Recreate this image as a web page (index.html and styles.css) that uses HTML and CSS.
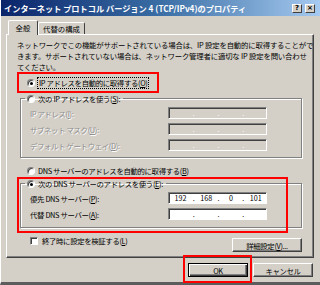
FILE: index.html
```html
<!DOCTYPE html>
<html lang="ja">
<head>
<meta charset="utf-8">
<link rel="stylesheet" href="styles.css">
</head>
<body>
<div class="window">
  <div class="titlebar">
    <span class="title">インターネット プロトコル バージョン 4 (TCP/IPv4)のプロパティ</span>
    <div class="tb-btns">
      <span class="tb-btn">?</span>
      <span class="tb-btn">×</span>
    </div>
  </div>
  <div class="tabs">
    <div class="tab active">全般</div>
    <div class="tab">代替の構成</div>
  </div>
  <div class="panel">
    <p class="desc">ネットワークでこの機能がサポートされている場合は、IP 設定を自動的に取得することがで<br>きます。サポートされていない場合は、ネットワーク管理者に適切な IP 設定を問い合わせ<br>てください。</p>
    <div class="hl-row">
      <span class="radio checked"></span>
      <span class="focus">IP アドレスを自動的に取得する(<u>O</u>)</span>
    </div>
    <fieldset class="group">
      <legend class="legend"><span class="radio"></span><span>次の IP アドレスを使う(<u>S</u>):</span></legend>
      <div class="row"><span class="label dis">IP アドレス(<u>I</u>):</span><span class="ipfield disabled"><i></i><b>.</b><i></i><b>.</b><i></i><b>.</b><i></i></span></div>
      <div class="row"><span class="label dis">サブネット マスク(<u>U</u>):</span><span class="ipfield disabled"><i></i><b>.</b><i></i><b>.</b><i></i><b>.</b><i></i></span></div>
      <div class="row"><span class="label dis">デフォルト ゲートウェイ(<u>D</u>):</span><span class="ipfield disabled"><i></i><b>.</b><i></i><b>.</b><i></i><b>.</b><i></i></span></div>
    </fieldset>
    <div class="opt-row">
      <span class="radio"></span>
      <span>DNS サーバーのアドレスを自動的に取得する(<u>B</u>)</span>
    </div>
    <fieldset class="group group2">
      <legend class="legend"><span class="radio checked"></span><span>次の DNS サーバーのアドレスを使う(<u>E</u>):</span></legend>
      <div class="row"><span class="label">優先 DNS サーバー(<u>P</u>):</span><span class="ipfield"><i>192</i><b>.</b><i>168</i><b>.</b><i>0</i><b>.</b><i>101</i></span></div>
      <div class="row"><span class="label">代替 DNS サーバー(<u>A</u>):</span><span class="ipfield"><i></i><b>.</b><i></i><b>.</b><i></i><b>.</b><i></i></span></div>
    </fieldset>
    <div class="bottom-row">
      <div class="check-row">
        <span class="checkbox"></span>
        <span>終了時に設定を検証する(<u>L</u>)</span>
      </div>
      <span class="btn details">詳細設定(<u>V</u>)...</span>
    </div>
    <div class="redbox rb2"></div>
  </div>
  <div class="actions">
    <span class="btn default">OK</span>
    <span class="btn">キャンセル</span>
  </div>
  <div class="redbox rb3"></div>
</div>
</body>
</html>
```

FILE: styles.css
```css
* { box-sizing: border-box; }
html, body { margin: 0; padding: 0; }
body {
  width: 320px;
  height: 285px;
  overflow: hidden;
  background: #d4d0c8;
  font-family: "Noto Sans CJK JP", "Noto Sans", sans-serif;
  font-size: 7.4px;
  color: #000;
}
u { text-decoration: underline; text-underline-offset: 1px; }
.window {
  position: relative;
  width: 320px;
  height: 285px;
  border-left: 1px solid #fff;
  border-bottom: 3px solid #5c5c5c;
}
.titlebar {
  height: 16px;
  display: flex;
  align-items: center;
  padding: 0 5px 0 3px;
  background: linear-gradient(90deg, #0a246a 0%, #3a6ea5 50%, #a6caf0 100%);
  color: #fff;
  font-weight: bold;
  font-size: 8.2px;
  white-space: nowrap;
}
.title { letter-spacing: 0; }
.tb-btns { margin-left: auto; display: flex; gap: 3px; }
.tb-btn {
  width: 10px;
  height: 9px;
  background: #d4d0c8;
  color: #000;
  border: 1px solid;
  border-color: #fff #404040 #404040 #fff;
  font-size: 7px;
  line-height: 7px;
  text-align: center;
  font-family: "DejaVu Sans", sans-serif;
}
.tabs {
  height: 18px;
  display: flex;
  align-items: flex-end;
  padding-left: 7px;
}
.tab {
  height: 12px;
  padding: 0 4px;
  border: 1px solid;
  border-bottom: 0;
  border-color: #fff #404040 #fff #fff;
  border-radius: 2px 2px 0 0;
  line-height: 11px;
  width: 47px;
}
.tab.active {
  height: 15px;
  width: 30px;
  margin-bottom: -1px;
  padding-top: 1px;
  position: relative;
  z-index: 1;
  background: #d4d0c8;
  text-align: center;
}
.panel {
  position: relative;
  margin-left: 5px;
  width: 308px;
  height: 224px;
  border: 1px solid;
  border-color: #fff #404040 #404040 #fff;
  box-shadow: inset -1px -1px #808080;
  padding: 4px 11px 0 10px;
}
.desc {
  margin: 0;
  line-height: 11px;
  white-space: nowrap;
  letter-spacing: -0.18px;
}
.hl-row {
  display: inline-flex;
  align-items: center;
  height: 21px;
  border: 2px solid #f00;
  padding: 0 9px 0 8px;
  gap: 3px;
  letter-spacing: -0.35px;
}
.focus { outline: 1px dotted #000; line-height: 10px; padding: 0 1px; }
.radio {
  position: relative;
  display: inline-block;
  width: 8px;
  height: 8px;
  border-radius: 50%;
  background: #fff;
  border: 1px solid;
  border-color: #808080 #fff #fff #808080;
  box-shadow: inset 1px 1px #404040;
  flex: none;
}
.radio.checked::after {
  content: "";
  position: absolute;
  left: 2px;
  top: 2px;
  width: 3px;
  height: 3px;
  border-radius: 50%;
  background: #000;
}
.group {
  margin: 0 0 0 3px;
  width: 282px;
  padding: 3px 0 6px 9px;
  border: 1px solid #808080;
  box-shadow: inset 1px 1px #fff, 1px 1px #fff;
  min-width: 0;
}
.legend {
  display: flex;
  align-items: center;
  gap: 3px;
  height: 11px;
  padding: 0 3px 0 2px;
  margin-left: -5px;
  letter-spacing: -0.35px;
}
.row {
  display: flex;
  align-items: center;
  height: 12px;
  letter-spacing: -0.35px;
}
.row + .row { margin-top: 4px; }
.label { width: 138px; }
.dis { color: #8e8e8e; text-shadow: 1px 1px #fff; }
.ipfield {
  display: flex;
  align-items: center;
  width: 99px;
  height: 12px;
  background: #fff;
  border: 1px solid;
  border-color: #808080 #fff #fff #808080;
  box-shadow: inset 1px 1px #404040;
  font-size: 7.2px;
  letter-spacing: 0;
}
.ipfield i { font-style: normal; flex: 1; text-align: center; }
.ipfield b { font-weight: normal; width: 4px; text-align: center; }
.ipfield i:first-child { flex: 1.1; }
.ipfield.disabled { background: #d4d0c8; color: #fff; }
.opt-row {
  display: flex;
  align-items: center;
  gap: 3px;
  height: 11px;
  margin-top: 7px;
  padding-left: 10px;
  letter-spacing: -0.35px;
}
.group2 { margin-top: 2px; padding-bottom: 7px; }
.bottom-row {
  display: flex;
  align-items: flex-start;
  justify-content: space-between;
  padding-left: 13px;
}
.check-row {
  display: flex;
  align-items: center;
  gap: 4px;
  height: 11px;
  margin-top: 7px;
  letter-spacing: -0.35px;
}
.checkbox {
  width: 8px;
  height: 8px;
  background: #fff;
  border: 1px solid;
  border-color: #808080 #fff #fff #808080;
  box-shadow: inset 1px 1px #404040;
}
.btn {
  display: inline-flex;
  align-items: center;
  justify-content: center;
  height: 14px;
  background: #d4d0c8;
  border: 1px solid;
  border-color: #fff #404040 #404040 #fff;
  box-shadow: inset -1px -1px #808080;
  letter-spacing: -0.35px;
}
.details { width: 70px; margin-top: 10px; }
.actions {
  display: flex;
  justify-content: flex-end;
  gap: 5px;
  padding: 5px 7px 0 0;
}
.actions .btn { width: 60px; }
.btn.default {
  border: 1px solid #000;
  box-shadow: inset 1px 1px #fff, inset -1px -1px #404040, inset -2px -2px #808080;
}
.redbox {
  position: absolute;
  border: 2px solid #f00;
  pointer-events: none;
}
.rb2 { left: 10px; top: 142px; width: 271px; height: 56px; }
.rb3 { left: 182px; top: 255px; width: 69px; height: 28px; }
```
